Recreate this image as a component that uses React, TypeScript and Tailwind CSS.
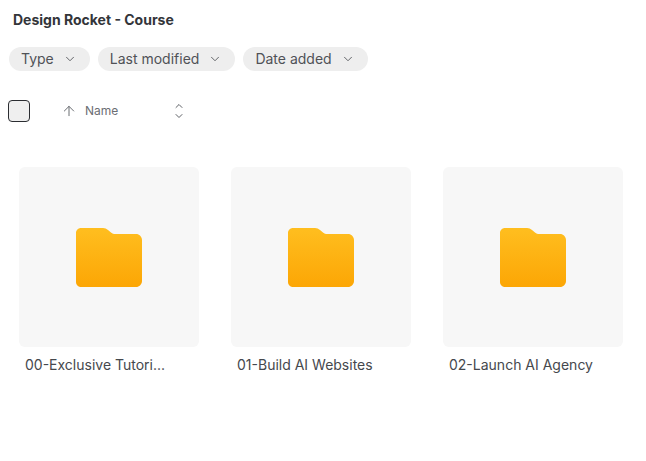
import { ChevronDown, ArrowUp } from "lucide-react";

const FILTERS = ["Type", "Last modified", "Date added"];
const FOLDERS = ["00-Exclusive Tutori...", "01-Build AI Websites", "02-Launch AI Agency"];

function FolderIcon() {
  return (
    <svg width="66" height="59" viewBox="0 0 66 59" fill="none">
      <defs>
        <linearGradient id="folder-fill" x1="0" y1="0" x2="0" y2="1">
          <stop offset="0" stopColor="#ffbe1f" />
          <stop offset="1" stopColor="#fca605" />
        </linearGradient>
      </defs>
      <path
        d="M5 0H27C29 0 30.5 .7 32 2L35 4.4C36.4 5.5 37.6 6 39.5 6H60C63.3 6 66 8.7 66 12V53C66 56.3 63.3 59 60 59H5C2.2 59 0 56.8 0 54V5C0 2.2 2.2 0 5 0Z"
        fill="url(#folder-fill)"
      />
    </svg>
  );
}

function SortIcon() {
  return (
    <svg width="10" height="16" viewBox="0 0 10 16" fill="none" stroke="#5f6267" strokeWidth="1" strokeLinecap="round" strokeLinejoin="round" className="ml-[56px]">
      <path d="M2 4.5L5 1.5L8 4.5" />
      <path d="M2 11.5L5 14.5L8 11.5" />
    </svg>
  );
}

export default function App() {
  return (
    <div className="h-[461px] w-[646px] overflow-hidden bg-white font-['Inter',sans-serif] text-[#3a3d42]">
      <h1 className="pl-[13px] pt-[12px] text-sm font-bold leading-4 text-[#33353a]">Design Rocket - Course</h1>

      <div className="mt-[19px] flex gap-2 pl-[9px]">
        {FILTERS.map((label) => (
          <div key={label} className="flex h-6 items-center gap-[9px] rounded-full bg-[#eeeeee] pl-3 pr-[13px] text-sm text-[#505257]">
            {label}
            <ChevronDown size={14} strokeWidth={1.5} />
          </div>
        ))}
      </div>

      <div className="mt-[29px] flex h-[22px] items-center pl-2">
        <div className="size-[22px] rounded-[4px] border border-[#2b2d31] bg-[#efefef]" />
        <ArrowUp size={16} strokeWidth={1.5} className="ml-[31px] text-[#6b6e73]" />
        <span className="ml-[8px] text-xs text-[#6b6e73]">Name</span>
        <SortIcon />
      </div>

      <div className="mt-[45px] flex gap-8 pl-[19px]">
        {FOLDERS.map((name) => (
          <div key={name} className="w-[180px]">
            <div className="flex h-[180px] items-center justify-center rounded-md bg-[#f7f7f7]">
              <FolderIcon />
            </div>
            <p className="mt-[9px] pl-[6px] text-sm leading-[18px] text-[#45484d]">{name}</p>
          </div>
        ))}
      </div>
    </div>
  );
}
